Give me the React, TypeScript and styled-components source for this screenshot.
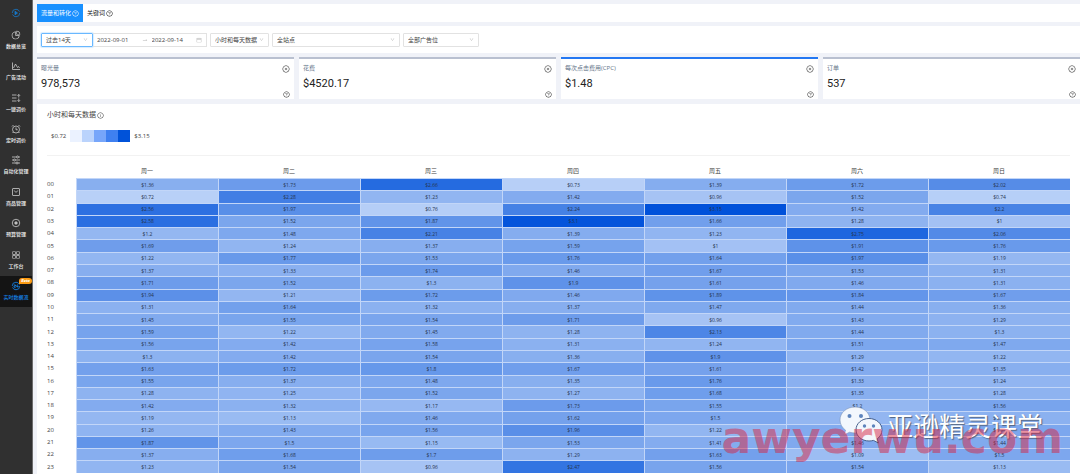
import React from 'react';
import styled, { createGlobalStyle } from 'styled-components';
import {
  AiOutlineAppstore,
  AiOutlineCalendar,
  AiOutlineCloseCircle,
  AiOutlineDown,
  AiOutlineInfoCircle,
  AiOutlinePieChart,
  AiOutlineQuestionCircle,
  AiOutlineSwapRight,
} from 'react-icons/ai';

const GlobalStyle = createGlobalStyle`
  *, *::before, *::after { box-sizing: border-box; }
  body {
    margin: 0;
    background: #f0f2f8;
    color: #444;
    font-family: "Open Sans", "Noto Sans CJK SC", sans-serif;
    font-size: 6px;
    line-height: 8px;
  }
  button, input, select { font: inherit; color: inherit; }
`;

const Page = styled.div`
  position: relative;
  display: flex;
  min-height: 100vh;
  overflow: hidden;
`;

/* Sidebar */

const Sidebar = styled.aside`
  flex: none;
  width: 33px;
  background: #303030;
  border-right: 1px solid #6c6c6c;
`;

const Brand = styled.a`
  display: flex;
  align-items: center;
  justify-content: center;
  height: 24px;
  padding-top: 2px;
  color: #1677c8;
`;

const Menu = styled.nav`
  display: grid;
  grid-auto-rows: 1fr;
  height: 283px;
`;

const MenuLink = styled.a<{ $active?: boolean }>`
  position: relative;
  display: flex;
  flex-direction: column;
  align-items: center;
  justify-content: center;
  gap: 3px;
  background: ${(p) => (p.$active ? '#141414' : 'transparent')};
  color: ${(p) => (p.$active ? '#1583e8' : '#f2f2f2')};
  font-size: 5px;
  font-weight: 500;
  line-height: 7px;
  white-space: nowrap;
  text-decoration: none;

  svg { opacity: ${(p) => (p.$active ? 1 : 0.8)}; }
`;

const BetaBadge = styled.span`
  position: absolute;
  top: 2px;
  right: 0;
  padding: 0 2px;
  border-radius: 3px 3px 3px 0;
  background: #fa9a14;
  color: #fff;
  font-size: 4px;
  font-style: italic;
  font-weight: 700;
  line-height: 6px;
`;

/* Main column */

const Main = styled.main`
  flex: 1;
  min-width: 0;
  display: flex;
  flex-direction: column;
  padding: 4px 0 0 4px;
`;

const TabBar = styled.div`
  display: flex;
  height: 18px;
  background: #fff;
`;

const Tab = styled.button<{ $active?: boolean }>`
  display: flex;
  align-items: center;
  gap: 1px;
  padding: 0 4px;
  border: 0;
  background: ${(p) => (p.$active ? '#1890ff' : 'transparent')};
  color: ${(p) => (p.$active ? '#fff' : '#222')};
`;

const FilterBar = styled.form`
  display: flex;
  align-items: center;
  gap: 3px;
  height: 27px;
  margin-top: 4px;
  padding: 0 4px;
  background: #fff;
`;

const RangeGroup = styled.div`
  display: flex;
`;

const SelectBox = styled.div<{ $width: number; $active?: boolean }>`
  display: flex;
  align-items: center;
  width: ${(p) => p.$width}px;
  height: 14px;
  padding-right: 4px;
  border: 1px solid ${(p) => (p.$active ? '#69b8ff' : '#e2e2e2')};
  border-radius: 1px;
  box-shadow: ${(p) => (p.$active ? '0 0 1px 1px #d9edff' : 'none')};

  select {
    flex: 1;
    min-width: 0;
    padding: 0 0 0 4px;
    border: 0;
    outline: 0;
    appearance: none;
    background: transparent;
    line-height: 10px;
  }
  svg { flex: none; color: #b4b4b4; }
`;

const DateRange = styled.div`
  display: flex;
  align-items: center;
  width: 114px;
  height: 14px;
  padding: 0 4px;
  border: 1px solid #e2e2e2;
  border-left: 0;

  svg { flex: none; color: #b4b4b4; }
  svg:first-of-type { margin-right: 4px; }
`;

const DateInput = styled.input`
  flex: 1;
  min-width: 0;
  padding: 0;
  border: 0;
  outline: 0;
  background: transparent;
`;

const Cards = styled.section`
  display: grid;
  grid-template-columns: repeat(4, 1fr);
  gap: 5px;
  margin-top: 4px;
`;

const Card = styled.article<{ $active?: boolean }>`
  display: grid;
  grid-template-columns: 1fr auto;
  align-content: space-between;
  height: 42px;
  padding: 4px 4px 1px;
  border-top: 2px solid ${(p) => (p.$active ? '#2478f2' : '#b9c0d0')};
  background: #fff;
`;

const CardTitle = styled.h2`
  margin: 0;
  color: #66758a;
  font-size: 6px;
  font-weight: 400;
  line-height: 10px;
`;

const CardValue = styled.p`
  margin: 0;
  padding-bottom: 6px;
  color: #222;
  font-family: Roboto, sans-serif;
  font-size: 11px;
  line-height: 16px;
`;

const IconButton = styled.button`
  display: flex;
  align-self: end;
  justify-self: end;
  padding: 0;
  border: 0;
  background: none;
  color: #333;
`;

const Panel = styled.section`
  flex: 1;
  margin-top: 5px;
  padding: 6px 10px 0;
  background: #fff;
`;

const PanelTitle = styled.h2`
  display: flex;
  align-items: center;
  gap: 1px;
  margin: 0;
  font-size: 7px;
  font-weight: 400;
  line-height: 10px;
`;

const Legend = styled.div`
  display: flex;
  align-items: center;
  gap: 4px;
  height: 36px;
  padding: 0 4px 4px;
  border-bottom: 1px solid #f2f2f2;
`;

const Scale = styled.div`
  display: flex;
`;

const Swatch = styled.span<{ $color: string }>`
  width: 12px;
  height: 12px;
  background: ${(p) => p.$color};
`;

const HeatTable = styled.table`
  width: 100%;
  height: 309px;
  margin-top: 8px;
  border-spacing: 0;
  table-layout: fixed;

  th {
    padding: 0;
    font-weight: 400;
  }
  thead th { height: 14px; }
  thead th:first-child { width: 29px; }
  tbody th { text-align: left; }
`;

const HeatCell = styled.td<{ $color: string }>`
  padding: 0;
  border-top: 1px solid #c2d6f8;
  border-left: 1px solid #c2d6f8;
  background: ${(p) => p.$color};
  color: #263650;
  font-size: 5px;
  line-height: 8px;
  text-align: center;
`;

/* Marks laid over the heat map */

const ChannelMark = styled.div`
  position: absolute;
  right: 37px;
  bottom: 30px;
  display: flex;
  align-items: center;
  gap: 2px;
  color: #fff;
  font-family: "Noto Sans CJK SC", sans-serif;
  font-size: 26px;
  line-height: 38px;
  text-shadow: 1px 1px 1px #52637e;
  pointer-events: none;
`;

const SiteMark = styled.div`
  position: absolute;
  right: 17px;
  bottom: 11px;
  color: rgba(214, 38, 68, 0.5);
  font-family: "DejaVu Sans", sans-serif;
  font-size: 44px;
  font-weight: 700;
  line-height: 50px;
  pointer-events: none;
`;

const Glyph = ({ children }: { children: React.ReactNode }) => (
  <svg width="10" height="10" viewBox="0 0 20 20" fill="none" stroke="currentColor" strokeWidth="1.6" aria-hidden="true">
    {children}
  </svg>
);

const menuItems: { label: string; icon: React.ReactNode }[] = [
  { label: '数据总览', icon: <AiOutlinePieChart size={10} /> },
  { label: '广告活动', icon: <Glyph><path d="M3 3v14h15M5 14l4-8 4 7 2-2 2 3" /></Glyph> },
  {
    label: '一键调价',
    icon: <Glyph><path d="M2 4h9M2 10h9M2 16h9M15.5 9V3M13 5.5 15.500 3 18 5.500M15.500 11v6M13 14.500l2.500 2.500 2.500-2.500" /></Glyph>,
  },
  {
    label: '定时调价',
    icon: <Glyph><circle cx="10" cy="11" r="7" /><path d="M10 7v4.500h3.500M2 5l3-3M18 5l-3-3M5 16l-2 2M15 16l2 2" /></Glyph>,
  },
  {
    label: '自动化管理',
    icon: <Glyph><path d="M2 4h9M15 4h3M2 10h3M9 10h9M2 16h8M14 16h4" /><circle cx="13" cy="4" r="2" /><circle cx="7" cy="10" r="2" /><circle cx="12" cy="16" r="2" /></Glyph>,
  },
  { label: '商品管理', icon: <Glyph><rect x="3" y="3" width="14" height="14" rx="1" /><path d="M6.500 7c1 4 6 4 7 0" /></Glyph> },
  { label: '预算管理', icon: <Glyph><circle cx="10" cy="10" r="7.500" /><path d="m10 7 3 3-3 3-3-3z" fill="currentColor" /></Glyph> },
  { label: '工作台', icon: <AiOutlineAppstore size={10} /> },
];

const metrics = [
  { title: '曝光量', value: '978,573' },
  { title: '花费', value: '$4520.17' },
  { title: '每次点击费用(CPC)', value: '$1.48', active: true },
  { title: '订单', value: '537' },
];

const legendColors = ['#ebf2ff', '#bad3fc', '#77a6fa', '#3f80f0', '#0052d9'];
const days = ['周一', '周二', '周三', '周四', '周五', '周六', '周日'];

const costs = [
  [1.36, 1.73, 2.66, 0.73, 1.39, 1.72, 2.02],
  [0.72, 2.28, 1.23, 1.42, 0.96, 1.52, 0.74],
  [2.56, 1.97, 0.76, 2.24, 3.15, 1.42, 2.2],
  [2.58, 1.52, 1.87, 3.1, 1.66, 1.28, 1],
  [1.2, 1.48, 2.21, 1.39, 1.23, 2.75, 2.06],
  [1.69, 1.24, 1.37, 1.59, 1, 1.91, 1.76],
  [1.22, 1.77, 1.53, 1.76, 1.64, 1.97, 1.19],
  [1.37, 1.33, 1.74, 1.46, 1.67, 1.53, 1.31],
  [1.71, 1.52, 1.3, 1.9, 1.61, 1.46, 1.31],
  [1.94, 1.21, 1.72, 1.46, 1.89, 1.84, 1.67],
  [1.31, 1.64, 1.32, 1.37, 1.47, 1.44, 1.36],
  [1.45, 1.55, 1.54, 1.71, 0.96, 1.43, 1.29],
  [1.59, 1.22, 1.45, 1.28, 2.13, 1.44, 1.3],
  [1.56, 1.42, 1.58, 1.31, 1.24, 1.51, 1.47],
  [1.3, 1.42, 1.54, 1.36, 1.9, 1.29, 1.22],
  [1.63, 1.72, 1.8, 1.67, 1.61, 1.42, 1.35],
  [1.55, 1.37, 1.48, 1.35, 1.76, 1.33, 1.24],
  [1.28, 1.25, 1.52, 1.27, 1.68, 1.35, 1.28],
  [1.42, 1.32, 1.17, 1.73, 1.55, 1.2, 1.56],
  [1.19, 1.13, 1.46, 1.62, 1.5, 1.21, 1.31],
  [1.26, 1.43, 1.56, 1.96, 1.22, 1.43, 1.51],
  [1.87, 1.5, 1.15, 1.53, 1.41, 1.46, 1.44],
  [1.37, 1.68, 1.7, 1.29, 1.63, 1.09, 1.5],
  [1.23, 1.54, 0.96, 2.47, 1.56, 1.54, 1.13],
];

const LOW = { value: 0.72, rgb: [184, 208, 247] };
const HIGH = { value: 3.15, rgb: [0, 81, 218] };

function heatColor(value: number) {
  const t = (value - LOW.value) / (HIGH.value - LOW.value);
  const channels = LOW.rgb.map((c, i) => Math.round(c + (HIGH.rgb[i] - c) * t));
  return `rgb(${channels.join(', ')})`;
}

function FilterSelect(props: { label: string; value: string; width: number; active?: boolean }) {
  return (
    <SelectBox $width={props.width} $active={props.active}>
      <select aria-label={props.label}>
        <option>{props.value}</option>
      </select>
      <AiOutlineDown size={5} />
    </SelectBox>
  );
}

const ChatLogo = () => (
  <svg width="46" height="38" viewBox="0 0 46 38" aria-hidden="true">
    <path
      d="M16 1C7.500 1 1 6.700 1 14c0 4.200 2.200 7.800 5.600 10.200L5 29l5.500-2.800c1.800.5 3.600.8 5.500.8 8.500 0 15-5.700 15-13S24.500 1 16 1z"
      fill="#f3f7fd" stroke="#7d93b8" strokeWidth=".6"
    />
    <circle cx="10.500" cy="10" r="2" fill="#5d84bd" />
    <circle cx="22" cy="10" r="2" fill="#5d84bd" />
    <path
      d="M30 12.500c-7.300 0-13 5-13 11.300S22.700 35 30 35c1.500 0 3-.2 4.400-.6L39.500 37l-1.300-4.200c3-2 4.800-5.300 4.800-9 0-6.300-5.700-11.300-13-11.300z"
      fill="#f3f7fd" stroke="#46608c" strokeWidth="1"
    />
    <circle cx="25.500" cy="20" r="1.700" fill="#5d84bd" />
    <circle cx="34.500" cy="20" r="1.700" fill="#5d84bd" />
  </svg>
);

export default function App() {
  return (
    <Page>
      <GlobalStyle />
      <Sidebar>
        <Brand href="#" aria-label="首页">
          <Glyph>
            <circle cx="10" cy="10" r="7.500" strokeDasharray="20 3" />
            <path d="m8 6.500 5 3.500-5 3.500z" fill="currentColor" />
          </Glyph>
        </Brand>
        <Menu>
          {menuItems.map((item) => (
            <MenuLink key={item.label} href="#">
              {item.icon}
              {item.label}
            </MenuLink>
          ))}
          <MenuLink href="#" $active>
            <Glyph>
              <circle cx="10" cy="10" r="7.500" strokeDasharray="20 3" />
              <path d="M5.500 8h3.500v2H6v2.500h3.500M13 7l-2 4h4M13.500 9v4" />
            </Glyph>
            实时数据流
            <BetaBadge>Beta</BetaBadge>
          </MenuLink>
        </Menu>
      </Sidebar>
      <Main>
        <TabBar>
          <Tab type="button" $active>流量和转化<AiOutlineQuestionCircle size={7} /></Tab>
          <Tab type="button">关键词<AiOutlineQuestionCircle size={7} /></Tab>
        </TabBar>
        <FilterBar>
          <RangeGroup>
            <FilterSelect label="时间范围" value="过去14天" width={52} active />
            <DateRange>
              <DateInput aria-label="开始日期" defaultValue="2022-09-01" />
              <AiOutlineSwapRight size={6} />
              <DateInput aria-label="结束日期" defaultValue="2022-09-14" />
              <AiOutlineCalendar size={6} />
            </DateRange>
          </RangeGroup>
          <FilterSelect label="数据粒度" value="小时和每天数据" width={59} />
          <FilterSelect label="站点" value="全站点" width={128} />
          <FilterSelect label="广告位" value="全部广告位" width={76} />
        </FilterBar>
        <Cards>
          {metrics.map((m) => (
            <Card key={m.title} $active={m.active}>
              <CardTitle>{m.title}</CardTitle>
              <IconButton type="button" aria-label="移除"><AiOutlineCloseCircle size={8} /></IconButton>
              <CardValue>{m.value}</CardValue>
              <IconButton type="button" aria-label="说明"><AiOutlineQuestionCircle size={7} /></IconButton>
            </Card>
          ))}
        </Cards>
        <Panel>
          <PanelTitle>小时和每天数据<AiOutlineInfoCircle size={7} /></PanelTitle>
          <Legend>
            $0.72
            <Scale>
              {legendColors.map((c) => <Swatch key={c} $color={c} />)}
            </Scale>
            $3.15
          </Legend>
          <HeatTable>
            <thead>
              <tr>
                <th />
                {days.map((d) => <th key={d} scope="col">{d}</th>)}
              </tr>
            </thead>
            <tbody>
              {costs.map((row, hour) => (
                <tr key={hour}>
                  <th scope="row">{String(hour).padStart(2, '0')}</th>
                  {row.map((cost, i) => (
                    <HeatCell key={days[i]} $color={heatColor(cost)}>${cost}</HeatCell>
                  ))}
                </tr>
              ))}
            </tbody>
          </HeatTable>
        </Panel>
      </Main>
      <ChannelMark><ChatLogo />亚逊精灵课堂</ChannelMark>
      <SiteMark>awyerwu.com</SiteMark>
    </Page>
  );
}
